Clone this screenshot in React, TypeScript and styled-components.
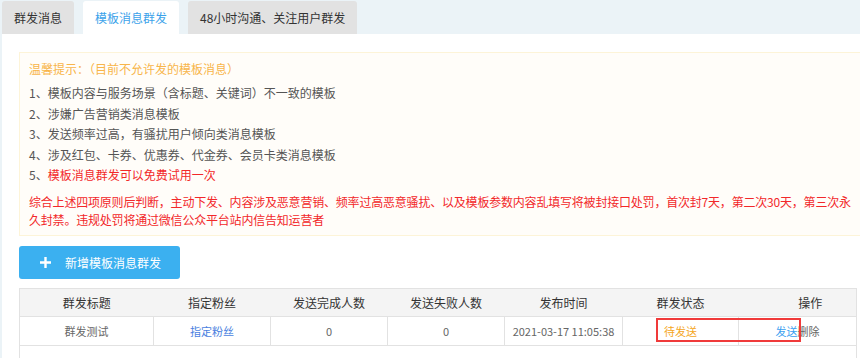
import React from "react";
import styled, { createGlobalStyle } from "styled-components";

const GlobalStyle = createGlobalStyle`
  html, body {
    margin: 0;
    padding: 0;
    overflow: hidden;
    background: #ebf3f7;
  }
  body {
    font-family: "Noto Sans CJK SC", "Liberation Sans", sans-serif;
    font-size: 12px;
    color: #555;
  }
`;

const Page = styled.div`
  padding-left: 2px;
  height: 358px;
  overflow: hidden;
`;

const TabBar = styled.div`
  display: flex;
  align-items: flex-end;
  gap: 9px;
  height: 34px;
`;

const Tab = styled.div<{ $active?: boolean }>`
  height: 33px;
  padding: 0 12px;
  display: flex;
  align-items: center;
  border-radius: 3px 3px 0 0;
  background: ${({ $active }) => ($active ? "#fff" : "#e2e2e2")};
  color: ${({ $active }) => ($active ? "#3ba2ea" : "#333")};
  font-size: 12px;
  white-space: nowrap;
`;

const Panel = styled.div`
  background: #fff;
  height: 324px;
  padding: 18px 0 0 17px;
  box-sizing: border-box;
`;

const Notice = styled.div`
  background: #fffdf9;
  border: 1px solid #fdf4d8;
  border-right: 0;
  padding: 6px 0 6px 9px;
`;

const NoticeTitle = styled.div`
  color: #f8b54a;
  line-height: 20px;
  margin-bottom: 4px;
`;

const NoticeItem = styled.div`
  line-height: 20.5px;
  color: #555;
  span {
    color: #f2282a;
  }
`;

const Warning = styled.p`
  margin: 7px 0 0;
  color: #f2282a;
  line-height: 18px;
  letter-spacing: -0.2px;
`;

const AddButton = styled.button`
  margin-top: 10px;
  width: 161px;
  height: 33px;
  border: 0;
  border-radius: 3px;
  background: #3bb0f0;
  color: #fff;
  font-family: inherit;
  font-size: 12px;
  display: flex;
  align-items: center;
  padding: 0 0 0 21px;
  gap: 14px;
`;

const Plus = styled.svg`
  width: 11px;
  height: 11px;
`;

const TableWrap = styled.div`
  position: relative;
  margin-top: 9px;
  width: 837px;
`;

const Table = styled.table`
  width: 100%;
  border-collapse: collapse;
  table-layout: fixed;
  border-left: 1px solid #e2e2e2;
  border-right: 1px solid #e2e2e2;
`;

const HeadCell = styled.th<{ $shift?: number }>`
  height: 27px;
  background: #f4f4f4;
  border-top: 1px solid #e2e2e2;
  border-bottom: 1px solid #e2e2e2;
  font-weight: normal;
  color: #333;
  font-size: 12px;
  padding: 0 0 0 ${({ $shift }) => $shift ?? 0}px;
  text-align: center;
`;

const Cell = styled.td<{ $color?: string }>`
  height: 28px;
  border: 1px solid #e2e2e2;
  border-top: 0;
  text-align: center;
  font-size: 11px;
  color: ${({ $color }) => $color ?? "#666"};
  padding: 0;
`;

const EmptyCell = styled.td`
  height: 30px;
`;

const Link = styled.a<{ $color: string }>`
  color: ${({ $color }) => $color};
  text-decoration: none;
`;

const Highlight = styled.div`
  position: absolute;
  left: 637px;
  top: 30px;
  width: 145px;
  height: 24px;
  box-sizing: border-box;
  border: 2px solid #f03a3a;
  pointer-events: none;
`;

const widths = [134, 117, 117, 117, 118, 116, 118];
const headers = ["群发标题", "指定粉丝", "发送完成人数", "发送失败人数", "发布时间", "群发状态", "操作"];

const items = [
  "1、模板内容与服务场景（含标题、关键词）不一致的模板",
  "2、涉嫌广告营销类消息模板",
  "3、发送频率过高，有骚扰用户倾向类消息模板",
  "4、涉及红包、卡券、优惠券、代金券、会员卡类消息模板",
];

const App: React.FC = () => {
  return (
    <Page>
      <GlobalStyle />
      <TabBar>
        <Tab>群发消息</Tab>
        <Tab $active>模板消息群发</Tab>
        <Tab>48小时沟通、关注用户群发</Tab>
      </TabBar>
      <Panel>
        <Notice>
          <NoticeTitle>温馨提示：（目前不允许发的模板消息）</NoticeTitle>
          {items.map((t) => (
            <NoticeItem key={t}>{t}</NoticeItem>
          ))}
          <NoticeItem>
            5、<span>模板消息群发可以免费试用一次</span>
          </NoticeItem>
          <Warning>
            综合上述四项原则后判断，主动下发、内容涉及恶意营销、频率过高恶意骚扰、以及模板参数内容乱填写将被封接口处罚，首次封7天，第二次30天，第三次永久封禁。违规处罚将通过微信公众平台站内信告知运营者
          </Warning>
        </Notice>
        <AddButton>
          <Plus viewBox="0 0 11 11">
            <path d="M4.3 0h2.4v4.3H11v2.4H6.7V11H4.3V6.7H0V4.3h4.3z" fill="#fff" />
          </Plus>
          新增模板消息群发
        </AddButton>
        <TableWrap>
          <Table>
            <colgroup>
              {widths.map((w, i) => (
                <col key={i} style={{ width: w }} />
              ))}
            </colgroup>
            <thead>
              <tr>
                {headers.map((h, i) => (
                  <HeadCell key={h} $shift={i === 6 ? 26 : 0}>
                    {h}
                  </HeadCell>
                ))}
              </tr>
            </thead>
            <tbody>
              <tr>
                <Cell>群发测试</Cell>
                <Cell>
                  <Link href="#" $color="#4a7fe0">指定粉丝</Link>
                </Cell>
                <Cell>0</Cell>
                <Cell>0</Cell>
                <Cell>2021-03-17 11:05:38</Cell>
                <Cell $color="#f5a623">待发送</Cell>
                <Cell>
                  <Link href="#" $color="#3ba0f0">发送</Link>删除
                </Cell>
              </tr>
              <tr>
                <EmptyCell colSpan={7} />
              </tr>
            </tbody>
          </Table>
          <Highlight />
        </TableWrap>
      </Panel>
    </Page>
  );
};

export default App;
